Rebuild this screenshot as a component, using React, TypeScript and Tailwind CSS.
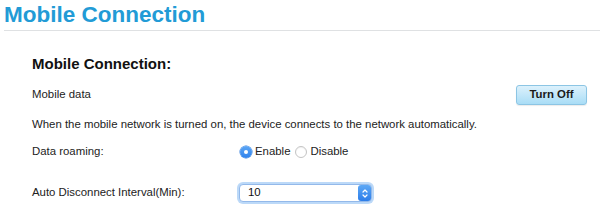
import { useState } from "react";

const FONT = { fontFamily: '"Liberation Sans", Arial, Helvetica, sans-serif' };

function Radio({ checked, label, onClick }: { checked: boolean; label: string; onClick: () => void }) {
  return (
    <button onClick={onClick} className="flex items-center gap-[3px] text-[11.4px] text-[#222]">
      {checked ? (
        <span className="flex h-[12px] w-[12px] items-center justify-center rounded-full bg-gradient-to-b from-[#5ba6f5] to-[#2e82ec] shadow-[0_0_0_0.5px_#2a78da]">
          <span className="h-[4px] w-[4px] rounded-full bg-white" />
        </span>
      ) : (
        <span className="h-[12px] w-[12px] rounded-full border border-[#c4c4c4] bg-white shadow-[inset_0_1px_1px_rgba(0,0,0,0.06)]" />
      )}
      {label}
    </button>
  );
}

export default function App() {
  const [roaming, setRoaming] = useState(true);

  return (
    <div className="h-[216px] w-[600px] overflow-hidden bg-white" style={FONT}>
      {/* Page title */}
      <div className="ml-1 h-[31px] border-b border-[#dfe1e3] pt-[2px]">
        <h1 className="text-[22.5px] font-bold leading-[26px] text-[#229bd6]">Mobile Connection</h1>
      </div>

      <div className="pl-[32px] pr-[13px] text-[#222]">
        <h2 className="mt-[23px] text-[15px] font-bold leading-[20px] text-[#111]">Mobile Connection:</h2>

        {/* Mobile data */}
        <div className="mt-[11px] flex h-[20px] items-center justify-between">
          <span className="text-[11.4px]">Mobile data</span>
          <button className="h-[20px] w-[71px] rounded-[3px] border border-[#8cc5e4] bg-gradient-to-b from-[#dcf1fc] to-[#a9ddf6] text-[11.4px] font-bold text-[#1a1a1a] shadow-[0_1px_1px_rgba(0,0,0,0.08)]">
            Turn Off
          </button>
        </div>

        <p className="mt-[11px] text-[11.4px] leading-[16px]">
          When the mobile network is turned on, the device connects to the network automatically.
        </p>

        {/* Data roaming */}
        <div className="mt-[12px] flex h-[16px] items-center">
          <span className="w-[208px] text-[11.4px]">Data roaming:</span>
          <div className="flex items-center gap-[5px]">
            <Radio checked={roaming} label="Enable" onClick={() => setRoaming(true)} />
            <Radio checked={!roaming} label="Disable" onClick={() => setRoaming(false)} />
          </div>
        </div>

        {/* Auto disconnect */}
        <div className="mt-[22px] flex h-[22px] items-center">
          <span className="w-[205px] text-[11.4px]">Auto Disconnect Interval(Min):</span>
          <div className="rounded-[6px] bg-[#bcd9f8] p-[2px]">
            <div className="flex h-[18px] w-[133px] items-center justify-between rounded-[4px] border border-[#93b9ea] bg-white pr-0 pl-[8px]">
              <span className="text-[11.4px] text-[#111]">10</span>
              <span className="flex h-[16px] w-[13px] items-center justify-center rounded-[3px] bg-gradient-to-b from-[#5ca8f6] to-[#2c7de9]">
                <svg width="6" height="11" viewBox="0 0 6 11" fill="none" stroke="white" strokeWidth="1.2" strokeLinecap="round" strokeLinejoin="round">
                  <path d="M1 4 L3 2 L5 4" />
                  <path d="M1 7 L3 9 L5 7" />
                </svg>
              </span>
            </div>
          </div>
        </div>
      </div>
    </div>
  );
}
